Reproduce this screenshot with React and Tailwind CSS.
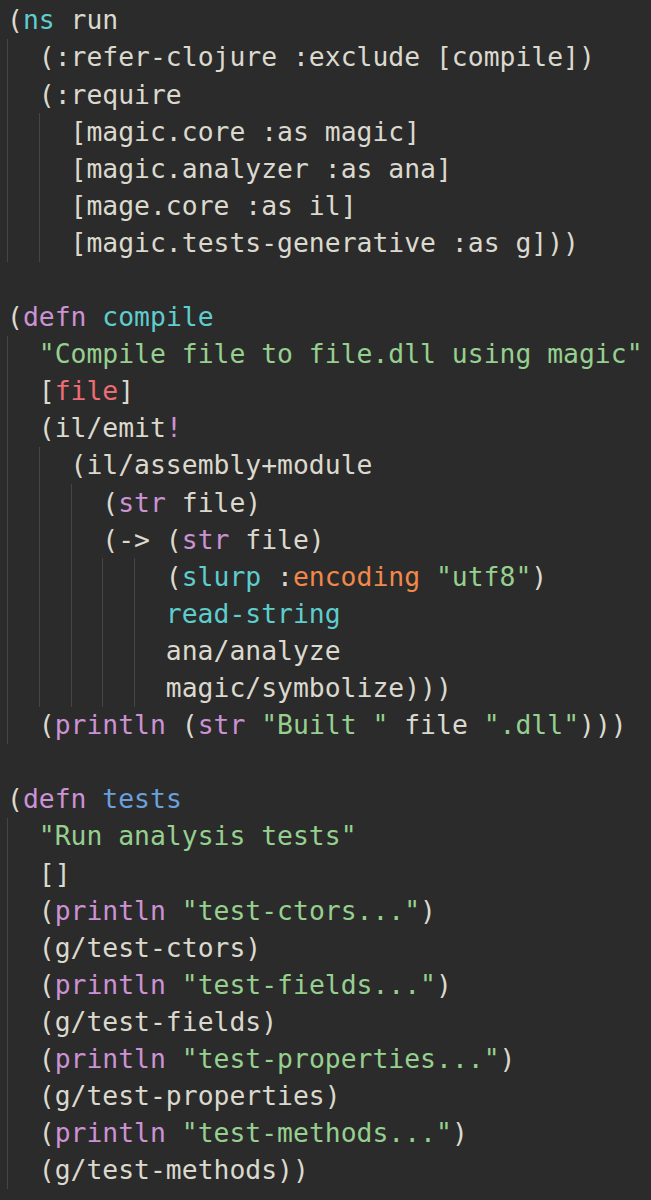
const C = {
  d: "text-[#dbd9ce]",
  p: "text-[#cb92d4]",
  t: "text-[#5ecdcd]",
  b: "text-[#6aa0de]",
  g: "text-[#96d08f]",
  r: "text-[#ee6c74]",
  o: "text-[#f2884a]",
};

// [indent, [[text, colorKey], ...]]
const lines = [
  [0, [["(", "d"], ["ns", "t"], [" run", "d"]]],
  [2, [["(:refer-clojure :exclude [compile])", "d"]]],
  [2, [["(:require", "d"]]],
  [4, [["[magic.core :as magic]", "d"]]],
  [4, [["[magic.analyzer :as ana]", "d"]]],
  [4, [["[mage.core :as il]", "d"]]],
  [4, [["[magic.tests-generative :as g]))", "d"]]],
  [0, []],
  [0, [["(", "d"], ["defn", "p"], [" ", "d"], ["compile", "t"]]],
  [2, [['"Compile file to file.dll using magic"', "g"]]],
  [2, [["[", "d"], ["file", "r"], ["]", "d"]]],
  [2, [["(il/emit", "d"], ["!", "p"]]],
  [4, [["(il/assembly+module", "d"]]],
  [6, [["(", "d"], ["str", "p"], [" file)", "d"]]],
  [6, [["(-> (", "d"], ["str", "p"], [" file)", "d"]]],
  [10, [["(", "d"], ["slurp", "t"], [" :", "d"], ["encoding", "o"], [" ", "d"], ['"utf8"', "g"], [")", "d"]]],
  [10, [["read-string", "t"]]],
  [10, [["ana/analyze", "d"]]],
  [10, [["magic/symbolize)))", "d"]]],
  [2, [["(", "d"], ["println", "p"], [" (", "d"], ["str", "p"], [" ", "d"], ['"Built "', "g"], [" file ", "d"], ['".dll"', "g"], [")))", "d"]]],
  [0, []],
  [0, [["(", "d"], ["defn", "p"], [" ", "d"], ["tests", "b"]]],
  [2, [['"Run analysis tests"', "g"]]],
  [2, [["[]", "d"]]],
  [2, [["(", "d"], ["println", "p"], [" ", "d"], ['"test-ctors..."', "g"], [")", "d"]]],
  [2, [["(g/test-ctors)", "d"]]],
  [2, [["(", "d"], ["println", "p"], [" ", "d"], ['"test-fields..."', "g"], [")", "d"]]],
  [2, [["(g/test-fields)", "d"]]],
  [2, [["(", "d"], ["println", "p"], [" ", "d"], ['"test-properties..."', "g"], [")", "d"]]],
  [2, [["(g/test-properties)", "d"]]],
  [2, [["(", "d"], ["println", "p"], [" ", "d"], ['"test-methods..."', "g"], [")", "d"]]],
  [2, [["(g/test-methods))", "d"]]],
];

const CodeLine = ({ indent, tokens }) => {
  const guides = [];
  for (let c = 0; c < indent; c += 2) guides.push(c);
  return (
    <div className="flex h-[37.1px] items-center whitespace-pre">
      {guides.map((c) => (
        <span key={c} className="inline-block w-[2ch] self-stretch border-l border-[#454545]" />
      ))}
      {tokens.map(([text, col], i) => (
        <span key={i} className={C[col]}>
          {text}
        </span>
      ))}
    </div>
  );
};

const App = () => {
  return (
    <main
      className="min-h-[1200px] w-[651px] overflow-hidden bg-[#2b2b2b] pl-[7px] pt-[2px] text-[26.4px] leading-none text-[#dbd9ce]"
      style={{ fontFamily: '"DejaVu Sans Mono", "Liberation Mono", monospace' }}
    >
      {lines.map(([indent, tokens], i) => (
        <CodeLine key={i} indent={indent} tokens={tokens} />
      ))}
    </main>
  );
};

export default App;
